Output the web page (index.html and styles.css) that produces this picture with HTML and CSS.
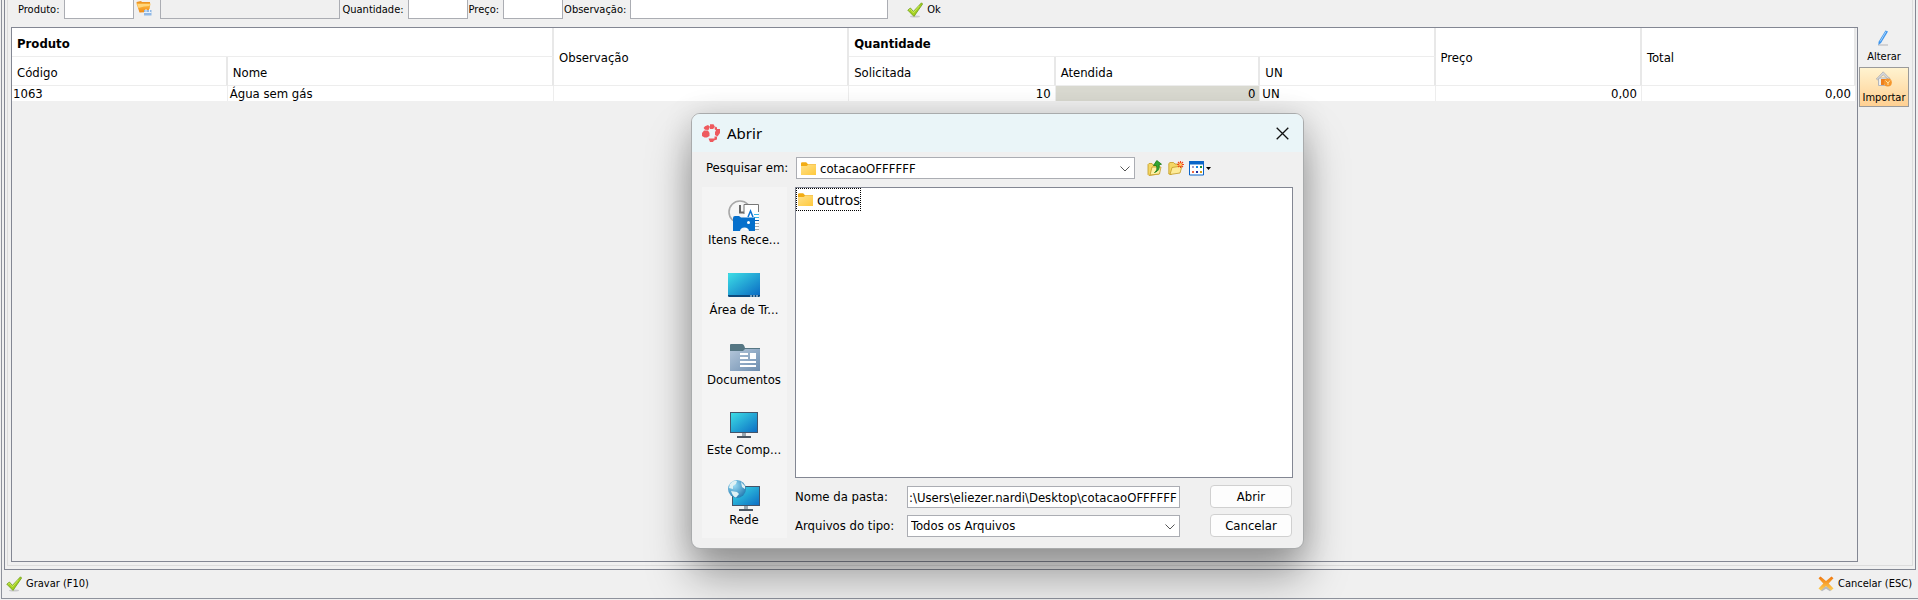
FILE: index.html
```html
<!DOCTYPE html>
<html lang="pt-BR">
<head>
<meta charset="utf-8">
<title>Cotação</title>
<link rel="stylesheet" href="styles.css">
</head>
<body>
<svg class="defs" aria-hidden="true">
  <defs>
    <linearGradient id="screen" x1="0" y1="0" x2="1" y2="1"><stop offset="0" stop-color="#3ddfe6"/><stop offset="1" stop-color="#0b6cc4"/></linearGradient>
    <linearGradient id="yellow" x1="0" y1="0" x2="1" y2="1"><stop offset="0" stop-color="#ffe18a"/><stop offset="1" stop-color="#ffc93c"/></linearGradient>
    <linearGradient id="orange" x1="0" y1="0" x2="0" y2="1"><stop offset="0" stop-color="#ffc04a"/><stop offset="1" stop-color="#f08a14"/></linearGradient>
    <linearGradient id="slate" x1="0" y1="0" x2="1" y2="1"><stop offset="0" stop-color="#b4c7da"/><stop offset="1" stop-color="#6e8eb0"/></linearGradient>
    <linearGradient id="cross" x1="0" y1="0" x2="0" y2="1"><stop offset="0" stop-color="#f0760c"/><stop offset="1" stop-color="#ffd257"/></linearGradient>
    <radialGradient id="globe" cx=".35" cy=".3" r=".8"><stop offset="0" stop-color="#9bdcf5"/><stop offset="1" stop-color="#1c75ad"/></radialGradient>
    <symbol id="check" viewBox="0 0 16 16">
      <ellipse cx="8" cy="14.6" rx="5" ry="1" fill="#c9c9cc"/>
      <path d="M.8 8.2 3.400 6l3 3.400L14.500.8 15.600 2 7 14.400z" fill="#a4d120" stroke="#6f9c1c" stroke-width=".8"/>
      <path d="M2 8.300 3.400 7.200l3 3.600 6-7" fill="none" stroke="#c9ea5c"/>
    </symbol>
    <symbol id="folder" viewBox="0 0 16 14">
      <path d="M0 1.500Q0 .3 1.200.3h4l1.800 2h8v4H0z" fill="#f2ac14"/>
      <path d="M0 4h5.600L7.200 2.800H15V13H0z" fill="url(#yellow)"/>
    </symbol>
  </defs>
</svg>

<main class="window">
  <section class="panel">
    <div class="group">
      <form class="entry">
        <label for="produto">Produto:</label>
        <input id="produto" class="w-code" type="text">
        <button type="button" class="lookup" aria-label="Pesquisar produto">
          <svg width="16" height="16" viewBox="0 0 16 16">
            <path d="M.5 2 5 1l1 1h8v3H1z" fill="#ed9526"/>
            <path d="M.5 3.500h14L13 12l-9.500.5z" fill="url(#orange)"/>
            <path d="M1.500 4h12.500l-.6 2Q8 6 2.500 8z" fill="#ffd67c"/>
            <path d="M8 10h7.500v5.500H8z" fill="#8fb8e6"/>
            <path d="M8 12.500h7.500M10 9v3M13.500 9v3" stroke="#e9f2fb"/>
          </svg>
        </button>
        <input class="w-name" type="text" disabled aria-label="Nome do produto">
        <label for="qtd">Quantidade:</label>
        <input id="qtd" class="w-num" type="text">
        <label for="preco">Preço:</label>
        <input id="preco" class="w-num" type="text">
        <label for="obs">Observação:</label>
        <input id="obs" class="w-obs" type="text">
        <button type="button" class="flat ok"><svg width="16" height="16"><use href="#check"/></svg>Ok</button>
      </form>
      <div class="content">
        <div class="grid">
          <table>
            <colgroup><col class="c1"><col class="c2"><col class="c3"><col class="c4"><col class="c5"><col class="c6"><col class="c7"><col></colgroup>
            <thead>
              <tr><th colspan="2" class="band">Produto</th><th rowspan="2">Observação</th><th colspan="3" class="band">Quantidade</th><th rowspan="2">Preço</th><th rowspan="2">Total</th></tr>
              <tr><th>Código</th><th>Nome</th><th>Solicitada</th><th>Atendida</th><th>UN</th></tr>
            </thead>
            <tbody>
              <tr><td>1063</td><td>Água sem gás</td><td></td><td class="num">10</td><td class="num locked">0</td><td>UN</td><td class="num">0,00</td><td class="num">0,00</td></tr>
            </tbody>
          </table>
        </div>
        <aside class="tools">
          <button type="button" class="tool">
            <svg width="16" height="16" viewBox="0 0 16 16"><path d="M2 15h10" stroke="#c4c4c8" stroke-width="1.400"/><path d="M9.500.5 12 1.400 5 13l-2.600 2 .2-3.200z" fill="#3b94ee"/><path d="M10 1.500 4.200 11.500" stroke="#a4d2fa"/></svg>
            Alterar
          </button>
          <button type="button" class="tool active">
            <svg width="16" height="16" viewBox="0 0 16 16"><path d="M2.500 7h11v7.500h-11z" fill="#eceef0" stroke="#b4b6ba"/><path d="M.3 8 7.200.8l7 7.200-1.400.8-5.600-5-5.700 5z" fill="#d6d8dc" stroke="#9c9ea4" stroke-width=".6"/><path d="M5 8h5v3H8v3H5z" fill="#ee7f1c"/><circle cx="11.800" cy="11.600" r="4" fill="#f5962c"/><path d="M9.500 9.500 12 12l2-2.500M12 12v2" stroke="#ffe0a0" fill="none"/></svg>
            Importar
          </button>
        </aside>
      </div>
    </div>
  </section>
  <footer class="actions">
    <button type="button" class="flat"><svg width="16" height="16"><use href="#check"/></svg>Gravar (F10)</button>
    <button type="button" class="flat">
      <svg width="16" height="16" viewBox="0 0 16 16"><path d="M2 13.500 8 10l6 3.500-2 1.800-4-2.600-4 2.600z" fill="#b7b9bf"/><path d="M.5 2.200 2.500.5 8 5 13.500.5l2 1.700L10.700 7.500l4.800 5-2.400 2L8 10l-5.100 4.500-2.400-2 4.800-5z" fill="url(#cross)"/></svg>
      Cancelar (ESC)
    </button>
  </footer>
</main>

<div class="dialog" role="dialog" aria-labelledby="dlg-title">
  <header class="titlebar">
    <svg width="18" height="18" viewBox="0 0 18 18" fill="#ee5a5e"><path d="M3 2.200 6 1l2 1.800L6.500 6 3 5.800 1.600 4z"/><path d="M8 .3h3.500L13 3l-2 2H8z"/><path d="m13.500 2.500 1.500 1v1.500h3v4l-2.500 3.500L13 11V8l1-1.500-1.500-1.500z"/><path d="M0 9l2-2.500h4L7.500 9v3L5 13.500H2.500L0 12z"/><path d="M6.500 14.500h6v-2h2.500v3l-3 1-1 1.500H8z"/></svg>
    <h1 id="dlg-title">Abrir</h1>
    <button type="button" class="close" aria-label="Fechar"><svg width="13" height="13" viewBox="0 0 13 13"><path d="m.7.7 11.600 11.600M12.300.7.7 12.300" stroke="#111" stroke-width="1.300"/></svg></button>
  </header>
  <div class="lookin">
    <label for="pasta">Pesquisar em:</label>
    <div class="combo with-icon">
      <svg class="lead" width="16" height="14"><use href="#folder"/></svg>
      <select id="pasta"><option>cotacaoOFFFFFF</option></select>
      <svg class="arrow" width="10" height="6" viewBox="0 0 10 6"><path d="m.5.5 4.500 4.500L9.500.5" fill="none" stroke="#555"/></svg>
    </div>
    <div class="nav">
      <button type="button" aria-label="Subir um nível">
        <svg width="16" height="16" viewBox="0 0 16 16"><path d="M1 4.500 2 3.500h3l1 1.500h6V14l-10 1.500-1-1z" fill="#f4d765" stroke="#c39a25" stroke-width=".8"/><path d="M3 15 5 7h9l-1.500 7z" fill="#fdf0a4" stroke="#c39a25" stroke-width=".8"/><path d="M7.500 12.500Q11 10.500 9.400 5.500H6.500L9.800.5l4.700 3.700-2.500.6Q13.500 10.500 7.500 12.500z" fill="#32a532" stroke="#187818" stroke-width=".8"/></svg>
      </button>
      <button type="button" aria-label="Criar nova pasta">
        <svg width="16" height="16" viewBox="0 0 16 16"><path d="M.8 14V3.500L2 2.500h3.500L7 4h5v4L3 14.500z" fill="#f4d765" stroke="#c39a25" stroke-width=".8"/><path d="M2 14.500 4 7.500l10-1.500-2 7z" fill="#fdeb98" stroke="#c39a25" stroke-width=".8"/><path d="M12.500 1v7M9 4.500h7M10 2l5 5M15 2l-5 5" stroke="#f0481c" stroke-width="1.100"/><circle cx="12.500" cy="4.500" r="1.500" fill="#ffca62"/></svg>
      </button>
      <button type="button" class="view" aria-label="Menu Exibir">
        <svg width="22" height="15" viewBox="0 0 22 15"><path d="M.5.500h14v13.500H.5z" fill="#fff" stroke="#0a64c8"/><path d="M0 0h15v3.500H0z" fill="#0a64c8"/><path d="M3 5h2v2H3z" fill="#a79cc8"/><path d="M7 5h2v2H7z" fill="#1583e0"/><path d="M11 5h2v2h-2z" fill="#1a8a34"/><path d="M3 10h2v2H3z" fill="#ee6644"/><path d="M7 10h2v2H7z" fill="#222e9a"/><path d="M11 10h2v2h-2z" fill="#d79b16"/><path d="M17 6h5l-2.500 3z" fill="#000"/></svg>
      </button>
    </div>
  </div>
  <div class="body">
    <nav class="places">
      <button type="button">
        <svg width="32" height="32" viewBox="0 0 32 32"><circle cx="12" cy="12" r="11" fill="#f6f6f6" stroke="#a8a8a8" stroke-width="1.600"/><path d="M12 5v7.500h4" fill="none" stroke="#666" stroke-width="2"/><path d="M16.500 4.500h14V30h-14z" fill="#fff"/><path d="M16 14V4.500h14.500V12" fill="none" stroke="#777"/><path d="m20 17 2.500-6 2.500 6" fill="none" stroke="#0b72d2" stroke-width="1.500"/><path d="M26 14.500h5M26 17.500h5" stroke="#38b5e8"/><path d="M27 20.500h4" stroke="#0b5cad"/><path d="M27 23.500h4M27 26.500h4M27 29.500h4" stroke="#aaa"/><path d="M5 18q0-2 2-2h4l2 1.500h14V31h-6q-.5-3.500-4.500-3.500T12 31H5z" fill="#0670cc"/><circle cx="20.500" cy="22.500" r="1.500" fill="#fff"/></svg>
        <span>Itens Rece...</span>
      </button>
      <button type="button">
        <svg width="32" height="32" viewBox="0 0 32 32"><rect y="3" width="32" height="24" rx="1.200" fill="#0c4a7e"/><path d="M0 4q0-1 1-1h30q1 0 1 1v21H0z" fill="url(#screen)"/><path d="M22 26h2M25 26h2M28 26h2" stroke="#e0f3fa"/></svg>
        <span>Área de Tr...</span>
      </button>
      <button type="button">
        <svg width="32" height="32" viewBox="0 0 32 32"><path d="M2 5q0-1 1-1h11q2 0 3 4h15v5H2z" fill="#557683"/><path d="M2 11h13l2-2h15v22H2z" fill="url(#slate)"/><path d="M12 14h8M12 18h8M12 22h16M12 26h16" stroke="#fff" stroke-width="2"/><path d="M22 13h6v6h-6z" fill="#fff"/></svg>
        <span>Documentos</span>
      </button>
      <button type="button">
        <svg width="32" height="32" viewBox="0 0 32 32"><path d="M14 23h4v3h-4z" fill="#9aa7b0"/><path d="M9 26h14v2H9z" fill="#4b5763"/><rect x="2.500" y="2.500" width="27" height="20" fill="url(#screen)" stroke="#44546a"/></svg>
        <span>Este Comp...</span>
      </button>
      <button type="button">
        <svg width="32" height="32" viewBox="0 0 32 32"><path d="M16 26h4v3h-4z" fill="#9aa7b0"/><path d="M11 29h14v2H11z" fill="#4b5763"/><rect x="4.500" y="6.500" width="27" height="19" fill="url(#screen)" stroke="#44546a"/><circle cx="9" cy="9" r="9" fill="url(#globe)"/><path d="M2 4q3-4 7-3l-1 3-3 2v3L1 8zM13 2l4 4v3l-3-2zM3 11l6 1 2 2-3 3.500Q5 17 3 11z" fill="#dff1f4"/></svg>
        <span>Rede</span>
      </button>
    </nav>
    <div class="main">
      <div class="list" role="listbox" aria-label="Arquivos">
        <div class="item" role="option" aria-selected="false"><svg width="16" height="14"><use href="#folder"/></svg>outros</div>
      </div>
      <div class="fields">
        <label for="nome">Nome da pasta:</label>
        <input id="nome" type="text" value=":\Users\eliezer.nardi\Desktop\cotacaoOFFFFFF">
        <button type="button" class="push">Abrir</button>
        <label for="tipo">Arquivos do tipo:</label>
        <div class="combo">
          <select id="tipo"><option>Todos os Arquivos</option></select>
          <svg class="arrow" width="10" height="6" viewBox="0 0 10 6"><path d="m.5.5 4.500 4.500L9.500.5" fill="none" stroke="#555"/></svg>
        </div>
        <button type="button" class="push">Cancelar</button>
      </div>
    </div>
  </div>
</div>
</body>
</html>
```
FILE: styles.css
```css
* { box-sizing: border-box; }

body {
  margin: 0;
  background: #f0f0f0;
  color: #000;
  font: 11px/16px Tahoma, "DejaVu Sans Condensed", "Noto Sans", sans-serif;
  overflow: hidden;
}

button, input, select { font: inherit; color: inherit; margin: 0; }
button { background: none; border: 0; padding: 0; }
svg { display: block; flex: none; }
.defs { position: absolute; width: 0; height: 0; }

.window {
  display: flex;
  flex-direction: column;
  height: calc(100vh - 1px);
  margin-left: 1px;
  padding: 0 2px;
  border: solid #8e929c;
  border-width: 0 0 1px 1px;
}
.panel {
  flex: 1;
  display: flex;
  border: solid #838793;
  border-width: 0 1px 1px;
}
.group {
  flex: 1;
  display: flex;
  flex-direction: column;
  margin: 0 2px 3px;
  border: solid #dcdcdc;
  border-width: 0 1px 1px;
  padding: 0 2px 3px 3px;
}

.entry {
  display: flex;
  align-items: flex-start;
  height: 27px;
  padding-left: 7px;
}
.entry label { padding-top: 2px; margin-right: 4px; }
.entry label:first-child { margin-right: 5px; }
.entry input {
  height: 19px;
  border: 1px solid #abadb3;
  border-top: 0;
  background: #fff;
  margin-right: 1px;
}
.entry .w-code { margin-right: 2px; }
.entry input:disabled { background: #f0f0f0; margin-right: 2px; }
.w-code { width: 70px; }
.w-name { width: 180px; }
.w-num { width: 60px; }
.w-obs { width: 258px; }
.lookup { margin: 0 8px 0 0; }
.flat { display: flex; align-items: center; gap: 4px; }
.ok { margin: 2px 0 0 18px; }

.content { flex: 1; display: flex; }
.grid {
  flex: 1;
  border: 1px solid #838793;
  padding-right: 1px;
}
table {
  width: 100%;
  table-layout: fixed;
  border-collapse: separate;
  border-spacing: 0;
  font-size: 13px;
}
.c1 { width: 11.7%; }
.c2 { width: 17.7%; }
.c3 { width: 16%; }
.c4 { width: 11.2%; }
.c5 { width: 11.1%; }
.c6 { width: 9.5%; }
.c7 { width: 11.2%; }
th {
  height: 29px;
  padding: 3px 5px 0;
  background: #fff;
  border-right: 2px solid #e8e8e8;
  border-bottom: 1px solid #ededed;
  text-align: left;
  font-weight: normal;
}
th.band { font-weight: bold; }
td {
  height: 15px;
  padding: 0 2px;
  background: #fff;
  border-right: 1px solid #ededed;
  line-height: 15px;
}
td:first-child { padding-left: 1px; }
.num { text-align: right; padding-right: 4px; }
.locked { background: #d9d9d0; }

.tools { width: 52px; padding: 0 1px; }
.tool {
  display: flex;
  flex-direction: column;
  align-items: center;
  gap: 3px;
  width: 100%;
  height: 40px;
  padding-top: 3px;
}
.tool.active {
  border: 1px solid #9a9a9a;
  background: linear-gradient(#fff3d0, #ffd092);
}

.actions {
  display: flex;
  justify-content: space-between;
  padding: 6px 4px 6px 2px;
}

.dialog {
  position: absolute;
  left: 691px;
  top: 113px;
  width: 613px;
  border: 1px solid #a9abac;
  border-radius: 9px;
  background: #f0f0f0;
  box-shadow: 0 28px 44px rgba(0, 0, 0, .34), 0 2px 30px rgba(0, 0, 0, .14);
  font-size: 13px;
  padding-bottom: 10px;
}
.titlebar {
  display: flex;
  align-items: center;
  gap: 7px;
  height: 38px;
  padding: 0 14px 0 10px;
  background: #eaf5f8;
  border-radius: 8px 8px 0 0;
}
.titlebar h1 {
  flex: 1;
  margin: 0;
  font: 15px/20px "Noto Sans", sans-serif;
}
.lookin {
  display: flex;
  align-items: center;
  height: 35px;
  padding: 0 10px 3px 14px;
}
.lookin label { width: 90px; }
.combo { position: relative; }
.lookin .combo { width: 339px; }
.combo select {
  appearance: none;
  display: block;
  width: 100%;
  height: 22px;
  padding: 1px 20px 0 3px;
  border: 1px solid #abadb3;
  border-radius: 0;
  background: #fff;
}
.combo.with-icon select { padding-left: 23px; }
.lead { position: absolute; left: 5px; top: 5px; }
.arrow { position: absolute; right: 5px; top: 9px; pointer-events: none; }
.nav { display: flex; gap: 5px; margin-left: 12px; }

.body { display: flex; gap: 8px; padding: 0 10px; }
.places { width: 85px; height: 351px; background: #f4f4f4; }
.places button {
  display: flex;
  flex-direction: column;
  align-items: center;
  width: 100%;
  height: 70px;
  padding: 13px 1px 0 0;
}
.places span { white-space: nowrap; }
.main { flex: 1; }
.list {
  height: 291px;
  border: 1px solid #838793;
  background: #fff;
}
.item {
  display: flex;
  align-items: center;
  gap: 3px;
  width: max-content;
  height: 23px;
  padding: 1px 0 0 1px;
  border: 1px dotted #000;
  font: 14px/20px "Noto Sans", sans-serif;
}
.fields {
  display: grid;
  grid-template-columns: 112px 273px 82px;
  row-gap: 6px;
  align-items: center;
  padding-top: 7px;
}
.fields input {
  width: 100%;
  height: 22px;
  padding: 1px 1px 0;
  border: 1px solid #abadb3;
  background: #fff;
}
.fields .push {
  width: 82px;
  height: 23px;
  margin-left: 30px;
  border: 1px solid #d0d0d0;
  border-radius: 4px;
  background: #fdfdfd;
}
```
